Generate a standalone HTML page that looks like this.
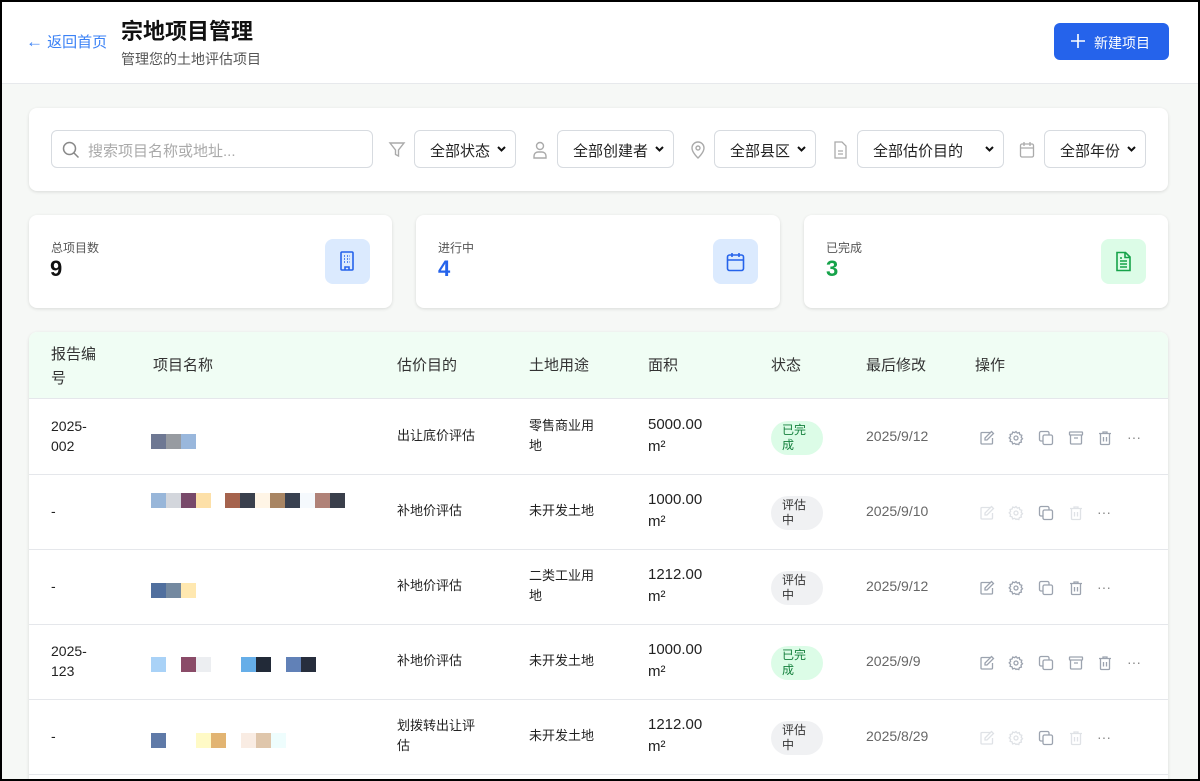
<!DOCTYPE html>
<html><head><meta charset="utf-8"><style>
*{box-sizing:border-box;margin:0;padding:0}
body{width:1200px;height:781px;overflow:hidden;background:#000;font-family:"Liberation Sans","Noto Sans CJK SC",sans-serif;position:relative}
#pg{position:absolute;left:2px;top:2px;width:1196px;height:777px;background:#f6f8f6;overflow:hidden}
.a{position:absolute}
.hdr{left:0;top:0;width:1196px;height:82px;background:#fff;border-bottom:1px solid #e7e9ec}
.card{background:#fff;border-radius:8px;box-shadow:0 1px 3px rgba(0,0,0,.12)}
.sel{position:absolute;top:128px;height:38px;border:1px solid #d7dbe0;border-radius:6px;background:#fff;font-size:15px;color:#222;padding:9px 0 0 15px}
.sel svg{position:absolute;right:9px;top:15px}
.ic{position:absolute;top:139px}
.lbl{font-size:12px;color:#555}
.sq{position:absolute;width:15px;height:15px}
.t{position:absolute;font-size:13px;color:#222;line-height:20px}
.th{position:absolute;font-size:15px;color:#333;line-height:24px}
.badge{position:absolute;left:769px;width:52px;height:34px;border-radius:17px;font-size:12px;line-height:15px;padding:2px 0 0 11px}
.g{background:#dcfce7;color:#15803d}.y{background:#f0f1f3;color:#333}
.ac svg{position:absolute}
.dt{position:absolute;color:#888;font-size:14px}
</style></head><body><div id="pg">
<div class="a hdr"></div>
<div class="a" style="left:24px;top:29px;font-size:15px;color:#3b82f6"><span style="font-size:17px">←</span> 返回首页</div>
<div class="a" style="left:119px;top:12px;font-size:22px;font-weight:bold;color:#111">宗地项目管理</div>
<div class="a" style="left:119px;top:47px;font-size:14px;color:#555">管理您的土地评估项目</div>
<div class="a" style="left:1052px;top:21px;width:115px;height:37px;background:#2563eb;border-radius:6px;color:#fff;font-size:14px;padding:10px 0 0 40px">新建项目</div>
<svg class="a" style="left:1069px;top:32px" width="14" height="14"><path d="M7 0v14M0 7h14" stroke="#fff" stroke-width="1.6"/></svg>

<div class="a card" style="left:27px;top:106px;width:1139px;height:83px"></div>
<div class="a" style="left:49px;top:128px;width:322px;height:38px;border:1px solid #d7dbe0;border-radius:6px;background:#fff"></div>
<svg class="a" style="left:60px;top:139px" width="18" height="18" viewBox="0 0 18 18" fill="none" stroke="#888" stroke-width="1.5"><circle cx="7.5" cy="7.5" r="6"/><path d="M12 12l4.5 4.5"/></svg>
<div class="a" style="left:86px;top:138px;font-size:15px;color:#aaa">搜索项目名称或地址...</div>
<svg class="ic" style="left:386px" width="18" height="18" viewBox="0 0 18 18" fill="none" stroke="#aaa" stroke-width="1.4"><path d="M2 2h14l-5.5 7v6l-3-1.5V9z"/></svg>
<div class="sel" style="left:412px;width:102px">全部状态<svg width="9" height="6"><path d="M1 1l3.5 3.5L8 1" stroke="#111" stroke-width="2" fill="none"/></svg></div>
<svg class="ic" style="left:530px" width="16" height="18" viewBox="0 0 16 18" fill="none" stroke="#aaa" stroke-width="1.4"><circle cx="8" cy="5" r="3.5"/><path d="M2 17v-2a4 4 0 014-4h4a4 4 0 014 4v2z"/></svg>
<div class="sel" style="left:555px;width:117px">全部创建者<svg width="9" height="6"><path d="M1 1l3.5 3.5L8 1" stroke="#111" stroke-width="2" fill="none"/></svg></div>
<svg class="ic" style="left:688px" width="16" height="18" viewBox="0 0 16 18" fill="none" stroke="#aaa" stroke-width="1.4"><path d="M8 17s6-5.5 6-10A6 6 0 002 7c0 4.5 6 10 6 10z"/><circle cx="8" cy="7" r="2"/></svg>
<div class="sel" style="left:712px;width:102px">全部县区<svg width="9" height="6"><path d="M1 1l3.5 3.5L8 1" stroke="#111" stroke-width="2" fill="none"/></svg></div>
<svg class="ic" style="left:831px" width="14" height="18" viewBox="0 0 14 18" fill="none" stroke="#aaa" stroke-width="1.3"><path d="M2 1h7l4 4v12H2z"/><path d="M5 10h5M5 13h5"/></svg>
<div class="sel" style="left:855px;width:147px">全部估价目的<svg width="9" height="6"><path d="M1 1l3.5 3.5L8 1" stroke="#111" stroke-width="2" fill="none"/></svg></div>
<svg class="ic" style="left:1017px" width="16" height="18" viewBox="0 0 16 18" fill="none" stroke="#aaa" stroke-width="1.3"><rect x="1.5" y="3" width="13" height="13" rx="1.5"/><path d="M1.5 7h13M5 1v4M11 1v4"/></svg>
<div class="sel" style="left:1042px;width:102px">全部年份<svg width="9" height="6"><path d="M1 1l3.5 3.5L8 1" stroke="#111" stroke-width="2" fill="none"/></svg></div>

<div class="a card" style="left:27px;top:213px;width:363px;height:93px"></div>
<div class="a card" style="left:414px;top:213px;width:364px;height:93px"></div>
<div class="a card" style="left:802px;top:213px;width:364px;height:93px"></div>
<div class="a lbl" style="left:49px;top:237px">总项目数</div>
<div class="a" style="left:48px;top:254px;font-size:22px;font-weight:bold;color:#111">9</div>
<div class="a" style="left:323px;top:237px;width:45px;height:45px;border-radius:8px;background:#dbeafe"></div>
<svg class="a" style="left:337px;top:249px" width="16" height="20" viewBox="0 0 16 20" fill="none" stroke="#2563eb" stroke-width="1.6"><rect x="2" y="1" width="12" height="18" rx="1"/><path d="M5 5h1M8 5h1M11 5h0M5 8h1M8 8h1M5 11h1M8 11h1M10.5 5h.5M10.5 8h.5M10.5 11h.5M6 19v-3h4v3"/></svg>
<div class="a lbl" style="left:436px;top:237px">进行中</div>
<div class="a" style="left:436px;top:254px;font-size:22px;font-weight:bold;color:#2563eb">4</div>
<div class="a" style="left:711px;top:237px;width:45px;height:45px;border-radius:8px;background:#dbeafe"></div>
<svg class="a" style="left:724px;top:250px" width="19" height="20" viewBox="0 0 19 20" fill="none" stroke="#2563eb" stroke-width="1.6"><rect x="1.5" y="3" width="16" height="15.5" rx="2"/><path d="M1.5 8h16M6 1v4M13 1v4"/></svg>
<div class="a lbl" style="left:824px;top:237px">已完成</div>
<div class="a" style="left:824px;top:254px;font-size:22px;font-weight:bold;color:#16a34a">3</div>
<div class="a" style="left:1099px;top:237px;width:45px;height:45px;border-radius:8px;background:#dcfce7"></div>
<svg class="a" style="left:1113px;top:249px" width="17" height="21" viewBox="0 0 17 21" fill="none" stroke="#16a34a" stroke-width="1.6"><path d="M2 1.5h8.5l4.5 4.5v13.5H2z"/><path d="M10 1.5V6.5h5M5 10h7M5 13h7M5 16h7M5 7h2"/></svg>

<div class="a card" style="left:27px;top:330px;width:1139px;height:460px;overflow:hidden">
<div class="a" style="left:0;top:0;width:1139px;height:67px;background:#f0fdf4;border-bottom:1px solid #e5e7eb"></div>
<div class="a" style="left:0;top:142px;width:1139px;border-top:1px solid #e5e7eb"></div>
<div class="a" style="left:0;top:217px;width:1139px;border-top:1px solid #e5e7eb"></div>
<div class="a" style="left:0;top:292px;width:1139px;border-top:1px solid #e5e7eb"></div>
<div class="a" style="left:0;top:367px;width:1139px;border-top:1px solid #e5e7eb"></div>
<div class="a" style="left:0;top:442px;width:1139px;border-top:1px solid #e5e7eb"></div>
</div>
<div class="th" style="left:49px;top:341px;width:50px">报告编号</div>
<div class="th" style="left:151px;top:352px">项目名称</div>
<div class="th" style="left:395px;top:352px">估价目的</div>
<div class="th" style="left:527px;top:352px">土地用途</div>
<div class="th" style="left:646px;top:352px">面积</div>
<div class="th" style="left:769px;top:352px">状态</div>
<div class="th" style="left:864px;top:352px">最后修改</div>
<div class="th" style="left:973px;top:352px">操作</div>

<div class="t" style="left:49px;top:414px;font-size:14px">2025-<br>002</div>
<div class="t" style="left:49px;top:499px;font-size:14px">-</div>
<div class="t" style="left:49px;top:574px;font-size:14px">-</div>
<div class="t" style="left:49px;top:639px;font-size:14px">2025-<br>123</div>
<div class="t" style="left:49px;top:724px;font-size:14px">-</div>

<div class="sq" style="left:149px;top:432px;background:#6e7893"></div><div class="sq" style="left:164px;top:432px;background:#979ba1"></div><div class="sq" style="left:179px;top:432px;background:#99b7dc"></div>
<div class="sq" style="left:149px;top:491px;background:#98b6d9"></div><div class="sq" style="left:164px;top:491px;background:#d3d6dc"></div><div class="sq" style="left:179px;top:491px;background:#78496a"></div><div class="sq" style="left:194px;top:491px;background:#fde0a8"></div><div class="sq" style="left:223px;top:491px;background:#a5634d"></div><div class="sq" style="left:238px;top:491px;background:#3a404d"></div><div class="sq" style="left:253px;top:491px;background:#fff5e6"></div><div class="sq" style="left:268px;top:491px;background:#a88563"></div><div class="sq" style="left:283px;top:491px;background:#394150"></div><div class="sq" style="left:298px;top:491px;background:#f5f9fd"></div><div class="sq" style="left:313px;top:491px;background:#b08278"></div><div class="sq" style="left:328px;top:491px;background:#3a3f4b"></div>
<div class="sq" style="left:149px;top:581px;background:#506f9e"></div><div class="sq" style="left:164px;top:581px;background:#7489a0"></div><div class="sq" style="left:179px;top:581px;background:#ffe8b0"></div>
<div class="sq" style="left:149px;top:655px;background:#a9d2f7"></div><div class="sq" style="left:179px;top:655px;background:#8a4b68"></div><div class="sq" style="left:194px;top:655px;background:#eceef1"></div><div class="sq" style="left:239px;top:655px;background:#66aee8"></div><div class="sq" style="left:254px;top:655px;background:#222a38"></div><div class="sq" style="left:284px;top:655px;background:#6181b7"></div><div class="sq" style="left:299px;top:655px;background:#272e3d"></div>
<div class="sq" style="left:149px;top:731px;background:#5f7aa8"></div><div class="sq" style="left:194px;top:731px;background:#fffac6"></div><div class="sq" style="left:209px;top:731px;background:#e2b472"></div><div class="sq" style="left:239px;top:731px;background:#f9ece3"></div><div class="sq" style="left:254px;top:731px;background:#dfc6ab"></div><div class="sq" style="left:269px;top:731px;background:#eefdfd"></div>

<div class="t" style="left:395px;top:424px">出让底价评估</div>
<div class="t" style="left:395px;top:499px">补地价评估</div>
<div class="t" style="left:395px;top:574px">补地价评估</div>
<div class="t" style="left:395px;top:649px">补地价评估</div>
<div class="t" style="left:395px;top:714px;width:85px">划拨转出让评估</div>
<div class="t" style="left:527px;top:414px;width:72px">零售商业用地</div>
<div class="t" style="left:527px;top:499px">未开发土地</div>
<div class="t" style="left:527px;top:564px;width:72px">二类工业用地</div>
<div class="t" style="left:527px;top:649px">未开发土地</div>
<div class="t" style="left:527px;top:724px">未开发土地</div>
<div class="t" style="left:646px;top:412px;font-size:15px;line-height:22px">5000.00<br>m²</div>
<div class="t" style="left:646px;top:487px;font-size:15px;line-height:22px">1000.00<br>m²</div>
<div class="t" style="left:646px;top:562px;font-size:15px;line-height:22px">1212.00<br>m²</div>
<div class="t" style="left:646px;top:637px;font-size:15px;line-height:22px">1000.00<br>m²</div>
<div class="t" style="left:646px;top:712px;font-size:15px;line-height:22px">1212.00<br>m²</div>
<div class="badge g" style="top:419px">已完<br>成</div>
<div class="badge y" style="top:494px">评估<br>中</div>
<div class="badge y" style="top:569px">评估<br>中</div>
<div class="badge g" style="top:644px">已完<br>成</div>
<div class="badge y" style="top:719px">评估<br>中</div>
<div class="t" style="left:864px;top:424px;color:#666;font-size:14px">2025/9/12</div>
<div class="t" style="left:864px;top:499px;color:#666;font-size:14px">2025/9/10</div>
<div class="t" style="left:864px;top:574px;color:#666;font-size:14px">2025/9/12</div>
<div class="t" style="left:864px;top:649px;color:#666;font-size:14px">2025/9/9</div>
<div class="t" style="left:864px;top:724px;color:#666;font-size:14px">2025/8/29</div>

<svg width="0" height="0" style="position:absolute"><defs>
<g id="ed" fill="none" stroke-width="1.3"><path d="M12 2.5H3a1 1 0 00-1 1V13a1 1 0 001 1h9.5a1 1 0 001-1V8"/><path d="M12.5 1.5l2 2L8 10H6V8z"/></g>
<g id="gr" fill="none" stroke-width="1.3"><circle cx="8" cy="8" r="2"/><path d="M8 1.5l1.3 1.6 2-.5.5 2 2 .7-.6 2 1.3 1.4-1.5 1.4.4 2-2 .5-.6 2-2-.6L8 14.5l-1.4-1.2-2 .6-.5-2-2-.6.5-2-1.4-1.4 1.4-1.4-.5-2 2-.5.6-2 2 .6z"/></g>
<g id="cp" fill="none" stroke-width="1.3"><rect x="5" y="5" width="9.5" height="9.5" rx="1.5"/><path d="M11 5V3a1.5 1.5 0 00-1.5-1.5H3A1.5 1.5 0 001.5 3v6.5A1.5 1.5 0 003 11h2"/></g>
<g id="ar" fill="none" stroke-width="1.3"><rect x="1.5" y="2" width="13" height="3" rx=".5"/><path d="M2.5 5v8a1 1 0 001 1h9a1 1 0 001-1V5M6 8h4"/></g>
<g id="tr" fill="none" stroke-width="1.3"><path d="M2 3.5h12M6 3.5V2h4v1.5M3.5 3.5v10a1 1 0 001 1h7a1 1 0 001-1v-10M6.5 7v4.5M9.5 7v4.5"/></g>
</defs></svg>
<div class="ac">
<svg style="left:977px;top:428px" width="16" height="16" stroke="#9ca3af"><use href="#ed"/></svg><svg style="left:1006px;top:428px" width="16" height="16" stroke="#9ca3af"><use href="#gr"/></svg><svg style="left:1036px;top:428px" width="16" height="16" stroke="#9ca3af"><use href="#cp"/></svg><svg style="left:1066px;top:428px" width="16" height="16" stroke="#9ca3af"><use href="#ar"/></svg><svg style="left:1095px;top:428px" width="16" height="16" stroke="#9ca3af"><use href="#tr"/></svg><div class="dt" style="left:1125px;top:427px">···</div>
<svg style="left:977px;top:503px" width="16" height="16" stroke="#dfe2e6"><use href="#ed"/></svg><svg style="left:1006px;top:503px" width="16" height="16" stroke="#dfe2e6"><use href="#gr"/></svg><svg style="left:1036px;top:503px" width="16" height="16" stroke="#9ca3af"><use href="#cp"/></svg><svg style="left:1066px;top:503px" width="16" height="16" stroke="#dfe2e6"><use href="#tr"/></svg><div class="dt" style="left:1095px;top:502px">···</div>
<svg style="left:977px;top:578px" width="16" height="16" stroke="#9ca3af"><use href="#ed"/></svg><svg style="left:1006px;top:578px" width="16" height="16" stroke="#9ca3af"><use href="#gr"/></svg><svg style="left:1036px;top:578px" width="16" height="16" stroke="#9ca3af"><use href="#cp"/></svg><svg style="left:1066px;top:578px" width="16" height="16" stroke="#9ca3af"><use href="#tr"/></svg><div class="dt" style="left:1095px;top:577px">···</div>
<svg style="left:977px;top:653px" width="16" height="16" stroke="#9ca3af"><use href="#ed"/></svg><svg style="left:1006px;top:653px" width="16" height="16" stroke="#9ca3af"><use href="#gr"/></svg><svg style="left:1036px;top:653px" width="16" height="16" stroke="#9ca3af"><use href="#cp"/></svg><svg style="left:1066px;top:653px" width="16" height="16" stroke="#9ca3af"><use href="#ar"/></svg><svg style="left:1095px;top:653px" width="16" height="16" stroke="#9ca3af"><use href="#tr"/></svg><div class="dt" style="left:1125px;top:652px">···</div>
<svg style="left:977px;top:728px" width="16" height="16" stroke="#dfe2e6"><use href="#ed"/></svg><svg style="left:1006px;top:728px" width="16" height="16" stroke="#dfe2e6"><use href="#gr"/></svg><svg style="left:1036px;top:728px" width="16" height="16" stroke="#9ca3af"><use href="#cp"/></svg><svg style="left:1066px;top:728px" width="16" height="16" stroke="#dfe2e6"><use href="#tr"/></svg><div class="dt" style="left:1095px;top:727px">···</div>
</div>
</div></body></html>
